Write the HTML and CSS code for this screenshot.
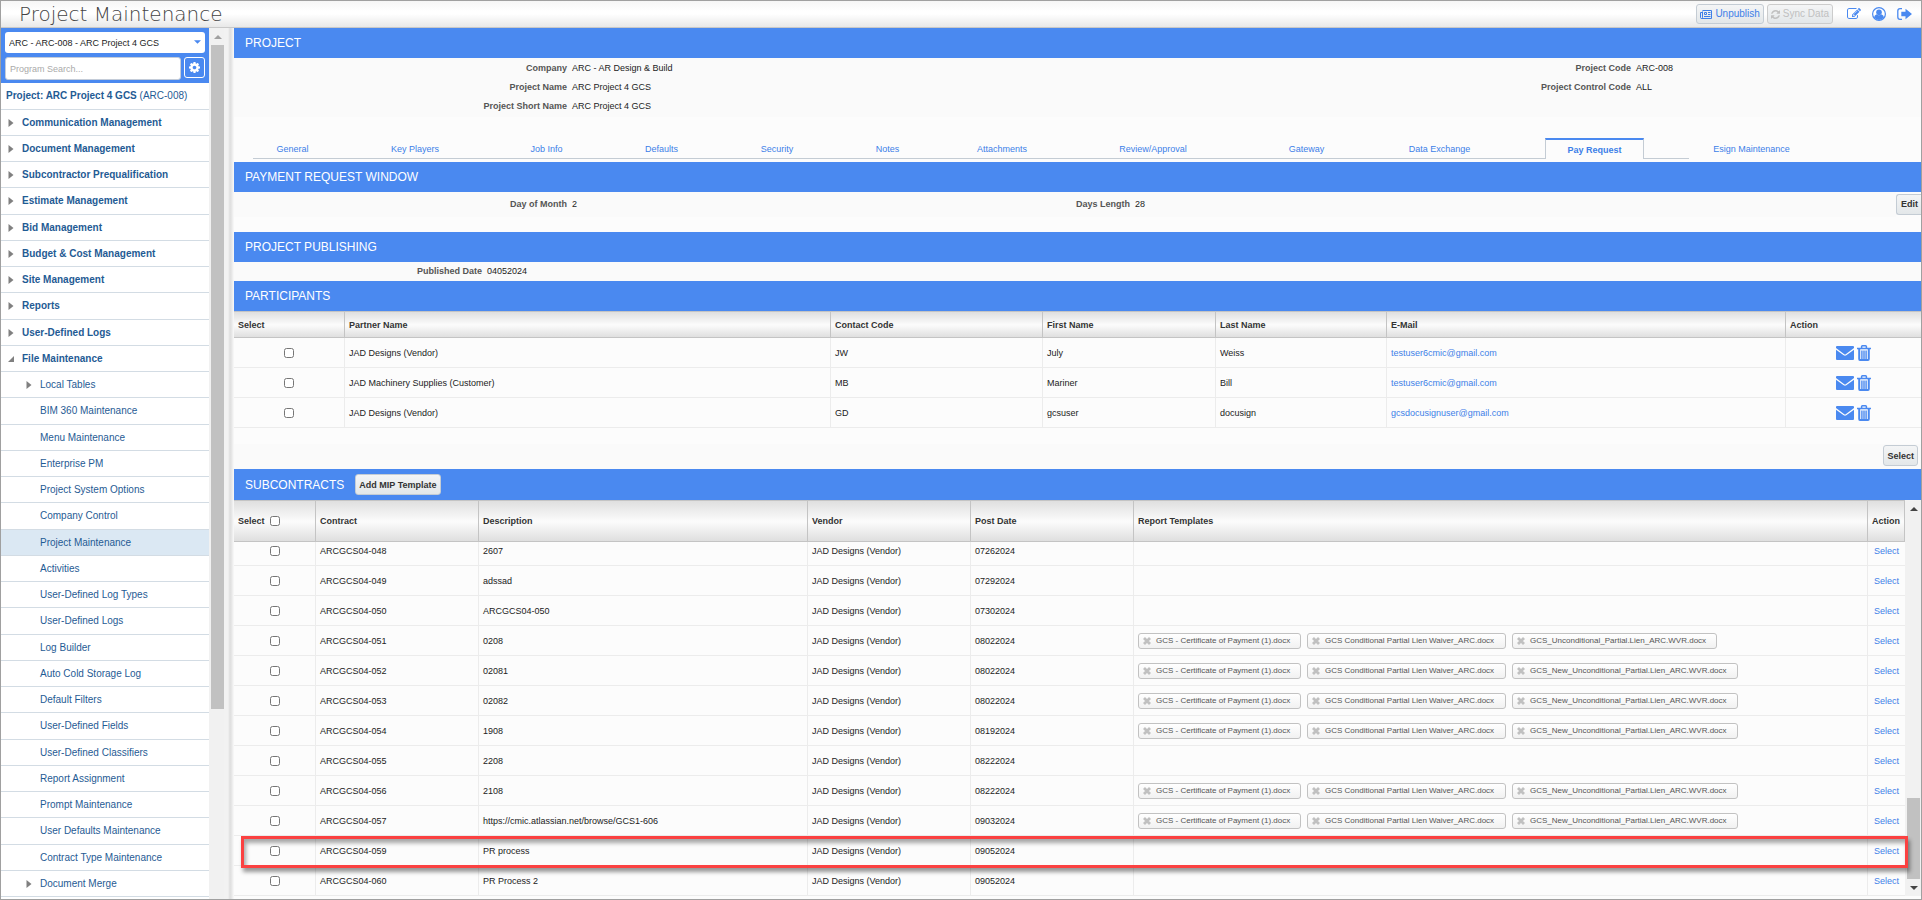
FILE: index.html
```html
<!DOCTYPE html>
<html lang="en">
<head>
<meta charset="utf-8">
<title>Project Maintenance</title>
<link rel="stylesheet" href="styles.css">
</head>
<body>
<svg class="defs" aria-hidden="true">
  <symbol id="i-mail" viewBox="0 0 18 14"><path fill="currentColor" d="M0 1Q0 0 1 0H17Q18 0 18 1V2L9.700 8.200Q9 8.700 8.300 8.200L0 2ZM0 3.700L7.700 9.300Q9 10.200 10.300 9.300L18 3.700V13Q18 14 17 14H1Q0 14 0 13Z"/></symbol>
  <symbol id="i-trash" viewBox="0 0 14 16"><path fill="none" stroke="currentColor" stroke-width="1.500" d="M4.600 3V1.600Q4.600 .8 5.400 .8H8.600Q9.400 .8 9.400 1.600V3M0 3.500H14"/><path fill="none" stroke="currentColor" stroke-width="2" d="M2.200 4V14Q2.200 15 3 15H11Q11.800 15 11.800 14V4"/><path fill="none" stroke="currentColor" stroke-width="1.400" d="M4.900 5.500V14M7 5.500V14M9.100 5.500V14"/></symbol>
  <symbol id="i-x" viewBox="0 0 8 8"><path fill="none" stroke="currentColor" stroke-width="2.800" d="M1 1L7 7M7 1L1 7"/></symbol>
  <symbol id="i-right" viewBox="0 0 5 8"><path fill="currentColor" d="M0 0L5 4L0 8Z"/></symbol>
  <symbol id="i-open" viewBox="0 0 6 6"><path fill="currentColor" d="M6 0V6H0Z"/></symbol>
  <symbol id="i-up" viewBox="0 0 8 4"><path fill="currentColor" d="M4 0L8 4H0Z"/></symbol>
  <symbol id="i-down" viewBox="0 0 8 4"><path fill="currentColor" d="M0 0H8L4 4Z"/></symbol>
</svg>
<div class="app">
  <header class="top">
    <h1>Project Maintenance</h1>
    <div class="tools">
      <button class="btn link-btn"><svg width="12" height="9" viewBox="0 0 12 9"><path fill="none" stroke="currentColor" d="M2.500 1.500V7.500Q2.500 8.500 1.500 8.500Q.5 8.500 .5 7.500V2.500H2.500M2.500 .5H11.500V8.500H1.500M8 2.500H10.500M8 4.500H10.500M4 6.500H10.500"/><path fill="none" stroke="currentColor" d="M4.500 2.500H6.500V4.500H4.500Z"/></svg>Unpublish</button>
      <button class="btn" disabled><svg width="9" height="9" viewBox="128 128 1536 1536"><path fill="currentColor" d="M1639 1056q0 5-1 7-64 268-268 434.500t-478 166.500q-146 0-282.500-55t-243.500-157l-129 129q-19 19-45 19t-45-19-19-45v-448q0-26 19-45t45-19h448q26 0 45 19t19 45-19 45l-137 137q71 66 161 102t187 36q134 0 250-65t186-179q11-17 53-117 8-23 30-23h192q13 0 22.500 9.500t9.500 22.500zm25-800v448q0 26-19 45t-45 19h-448q-26 0-45-19t-19-45 19-45l138-138q-148-137-349-137-134 0-250 65t-186 179q-11 17-53 117-8 23-30 23h-199q-13 0-22.500-9.500t-9.500-22.500v-7q65-268 270-434.500t480-166.500q146 0 284 55.500t245 156.500l130-129q19-19 45-19t45 19 19 45z"/></svg>Sync Data</button>
      <button class="icon-btn" aria-label="Edit"><svg width="14" height="12" viewBox="0 128 1792 1536"><path fill="currentColor" d="M888 1184l116-116-152-152-116 116v56h96v96h56zm440-720q-16-16-33 1l-350 350q-17 17-1 33t33-1l350-350q17-17 1-33zm80 594v190q0 119-84.500 203.500t-203.500 84.500h-832q-119 0-203.500-84.500t-84.500-203.500v-832q0-119 84.500-203.500t203.500-84.500h832q63 0 117 25 15 7 18 23 3 17-9 29l-49 49q-14 14-32 8-23-6-45-6h-832q-66 0-113 47t-47 113v832q0 66 47 113t113 47h832q66 0 113-47t47-113v-126q0-13 9-22l64-64q15-15 35-7t20 29zm-96-738l288 288-672 672h-288v-288zm444 132l-92 92-288-288 92-92q28-28 68-28t68 28l152 152q28 28 28 68t-28 68z"/></svg></button>
      <button class="icon-btn" aria-label="User"><svg width="14" height="14" viewBox="0 0 14 14"><circle cx="7" cy="7" r="6.400" fill="none" stroke="currentColor" stroke-width="1.200"/><circle cx="7" cy="5.300" r="2.800" fill="currentColor"/><path fill="currentColor" d="M2 10.600Q2.400 7.900 4.600 7.300Q7 9.400 9.400 7.300Q11.600 7.900 12 10.600Q9.800 13 7 13Q4.200 13 2 10.600Z"/></svg></button>
      <button class="icon-btn" aria-label="Sign out"><svg width="15" height="12" viewBox="0 0 15 12"><path fill="none" stroke="currentColor" stroke-width="1.300" d="M5 .7H3Q.8 .7 .8 3V9Q.8 11.300 3 11.300H5"/><path fill="currentColor" d="M4.300 3.800H8.500V.7L15 6L8.500 11.300V8.200H4.300Z"/></svg></button>
    </div>
  </header>
  <div class="body">
    <aside class="side">
      <div class="nav">
        <div class="finder">
          <div class="picker">
            <select aria-label="Project"><option>ARC - ARC-008 - ARC Project 4 GCS</option></select>
            <svg width="7" height="4"><use href="#i-down"/></svg>
          </div>
          <div class="search">
            <input type="text" aria-label="Program Search" placeholder="Program Search...">
            <button aria-label="Settings"><svg width="11" height="11" viewBox="128 128 1536 1536"><path fill="currentColor" d="M1152 896q0-106-75-181t-181-75-181 75-75 181 75 181 181 75 181-75 75-181zm512-109v222q0 12-8 23t-20 13l-185 28q-19 54-39 91 35 50 107 138 10 12 10 25t-9 23q-27 37-99 108t-94 71q-12 0-26-9l-138-108q-44 23-91 38-16 136-29 186-7 28-36 28h-222q-14 0-24.500-8.500t-11.500-21.500l-28-184q-49-16-90-37l-141 107q-10 9-25 9-14 0-25-11-126-114-165-168-7-10-7-23 0-12 8-23 15-21 51-66.500t54-70.500q-27-50-41-99l-183-27q-13-2-21-12.500t-8-23.500v-222q0-12 8-23t19-13l186-28q14-46 39-92-40-57-107-138-10-12-10-24 0-10 9-23 26-36 98.500-107.500t94.500-71.500q13 0 26 10l138 107q44-23 91-38 16-136 29-186 7-28 36-28h222q14 0 24.500 8.500t11.500 21.500l28 184q49 16 90 37l142-107q9-9 24-9 13 0 25 10 129 119 165 170 7 8 7 22 0 12-8 23-15 21-51 66.500t-54 70.500q26 50 41 98l183 28q13 2 21 12.500t8 23.500z"/></svg></button>
          </div>
        </div>
        <p class="current"><strong>Project: ARC Project 4 GCS</strong> (ARC-008)</p>
        <ul class="menu">
          <li class="group"><svg width="5" height="8"><use href="#i-right"/></svg><a href="#">Communication Management</a></li>
          <li class="group"><svg width="5" height="8"><use href="#i-right"/></svg><a href="#">Document Management</a></li>
          <li class="group"><svg width="5" height="8"><use href="#i-right"/></svg><a href="#">Subcontractor Prequalification</a></li>
          <li class="group"><svg width="5" height="8"><use href="#i-right"/></svg><a href="#">Estimate Management</a></li>
          <li class="group"><svg width="5" height="8"><use href="#i-right"/></svg><a href="#">Bid Management</a></li>
          <li class="group"><svg width="5" height="8"><use href="#i-right"/></svg><a href="#">Budget &amp; Cost Management</a></li>
          <li class="group"><svg width="5" height="8"><use href="#i-right"/></svg><a href="#">Site Management</a></li>
          <li class="group"><svg width="5" height="8"><use href="#i-right"/></svg><a href="#">Reports</a></li>
          <li class="group"><svg width="5" height="8"><use href="#i-right"/></svg><a href="#">User-Defined Logs</a></li>
          <li class="group"><svg width="6" height="6"><use href="#i-open"/></svg><a href="#">File Maintenance</a></li>
          <li class="sub"><svg width="5" height="8"><use href="#i-right"/></svg><a href="#">Local Tables</a></li>
          <li class="leaf"><a href="#">BIM 360 Maintenance</a></li>
          <li class="leaf"><a href="#">Menu Maintenance</a></li>
          <li class="leaf"><a href="#">Enterprise PM</a></li>
          <li class="leaf"><a href="#">Project System Options</a></li>
          <li class="leaf"><a href="#">Company Control</a></li>
          <li class="leaf selected"><a href="#">Project Maintenance</a></li>
          <li class="leaf"><a href="#">Activities</a></li>
          <li class="leaf"><a href="#">User-Defined Log Types</a></li>
          <li class="leaf"><a href="#">User-Defined Logs</a></li>
          <li class="leaf"><a href="#">Log Builder</a></li>
          <li class="leaf"><a href="#">Auto Cold Storage Log</a></li>
          <li class="leaf"><a href="#">Default Filters</a></li>
          <li class="leaf"><a href="#">User-Defined Fields</a></li>
          <li class="leaf"><a href="#">User-Defined Classifiers</a></li>
          <li class="leaf"><a href="#">Report Assignment</a></li>
          <li class="leaf"><a href="#">Prompt Maintenance</a></li>
          <li class="leaf"><a href="#">User Defaults Maintenance</a></li>
          <li class="leaf"><a href="#">Contract Type Maintenance</a></li>
          <li class="sub"><svg width="5" height="8"><use href="#i-right"/></svg><a href="#">Document Merge</a></li>
        </ul>
      </div>
      <div class="bar side-bar"><span class="arrow"><svg width="8" height="4"><use href="#i-up"/></svg></span><span class="thumb"></span><span class="rest"></span></div>
      <div class="splitter"></div>
    </aside>
    <main class="main">
      <h2>PROJECT</h2>
      <dl class="form project">
        <div class="f-left"><dt>Company</dt><dd>ARC - AR Design &amp; Build</dd></div>
        <div class="f-right"><dt>Project Code</dt><dd>ARC-008</dd></div>
        <div class="f-left"><dt>Project Name</dt><dd>ARC Project 4 GCS</dd></div>
        <div class="f-right"><dt>Project Control Code</dt><dd>ALL</dd></div>
        <div class="f-left"><dt>Project Short Name</dt><dd>ARC Project 4 GCS</dd></div>
      </dl>
      <ul class="tabs">
        <li><a href="#">General</a></li><li><a href="#">Key Players</a></li><li><a href="#">Job Info</a></li><li><a href="#">Defaults</a></li><li><a href="#">Security</a></li><li><a href="#">Notes</a></li><li><a href="#">Attachments</a></li><li><a href="#">Review/Approval</a></li><li><a href="#">Gateway</a></li><li><a href="#">Data Exchange</a></li><li></li><li class="on"><a href="#">Pay Request</a></li><li></li><li class="off"><a href="#">Esign Maintenance</a></li>
      </ul>
      <h2>PAYMENT REQUEST WINDOW</h2>
      <div class="window">
        <dl class="form payment">
          <div><dt>Day of Month</dt><dd>2</dd></div>
          <div><dt>Days Length</dt><dd>28</dd></div>
        </dl>
        <button class="btn edit">Edit</button>
      </div>
      <h2>PROJECT PUBLISHING</h2>
      <dl class="form publishing"><div><dt>Published Date</dt><dd>04052024</dd></div></dl>
      <h2>PARTICIPANTS</h2>
      <table class="people">
        <colgroup><col class="p1"><col class="p2"><col class="p3"><col class="p4"><col class="p5"><col class="p6"><col class="p7"></colgroup>
        <thead><tr><th>Select</th><th>Partner Name</th><th>Contact Code</th><th>First Name</th><th>Last Name</th><th>E-Mail</th><th>Action</th></tr></thead>
        <tbody>
          <tr><td class="mid"><input type="checkbox" aria-label="Select July Weiss"></td><td>JAD Designs (Vendor)</td><td>JW</td><td>July</td><td>Weiss</td><td><a href="#">testuser6cmic@gmail.com</a></td><td><div class="acts"><button aria-label="Email"><svg width="18" height="14"><use href="#i-mail"/></svg></button><button aria-label="Delete"><svg width="14" height="16"><use href="#i-trash"/></svg></button></div></td></tr>
          <tr><td class="mid"><input type="checkbox" aria-label="Select Mariner Bill"></td><td>JAD Machinery Supplies (Customer)</td><td>MB</td><td>Mariner</td><td>Bill</td><td><a href="#">testuser6cmic@gmail.com</a></td><td><div class="acts"><button aria-label="Email"><svg width="18" height="14"><use href="#i-mail"/></svg></button><button aria-label="Delete"><svg width="14" height="16"><use href="#i-trash"/></svg></button></div></td></tr>
          <tr><td class="mid"><input type="checkbox" aria-label="Select gcsuser docusign"></td><td>JAD Designs (Vendor)</td><td>GD</td><td>gcsuser</td><td>docusign</td><td><a href="#">gcsdocusignuser@gmail.com</a></td><td><div class="acts"><button aria-label="Email"><svg width="18" height="14"><use href="#i-mail"/></svg></button><button aria-label="Delete"><svg width="14" height="16"><use href="#i-trash"/></svg></button></div></td></tr>
        </tbody>
      </table>
      <div class="foot"><button class="btn">Select</button></div>
      <div class="heading"><h2>SUBCONTRACTS</h2><button class="btn">Add MIP Template</button></div>
      <div class="subs">
        <table class="contracts">
          <colgroup><col class="s1"><col class="s2"><col class="s3"><col class="s4"><col class="s5"><col><col class="s7"></colgroup>
          <thead><tr><th><label class="all">Select<input type="checkbox"></label></th><th>Contract</th><th>Description</th><th>Vendor</th><th>Post Date</th><th>Report Templates</th><th class="act">Action</th></tr></thead>
          <tbody>
            <tr class="cut"><td class="mid"><input type="checkbox" aria-label="ARCGCS04-048"></td><td>ARCGCS04-048</td><td>2607</td><td>JAD Designs (Vendor)</td><td>07262024</td><td></td><td class="act"><a href="#">Select</a></td></tr>
            <tr><td class="mid"><input type="checkbox" aria-label="ARCGCS04-049"></td><td>ARCGCS04-049</td><td>adssad</td><td>JAD Designs (Vendor)</td><td>07292024</td><td></td><td class="act"><a href="#">Select</a></td></tr>
            <tr><td class="mid"><input type="checkbox" aria-label="ARCGCS04-050"></td><td>ARCGCS04-050</td><td>ARCGCS04-050</td><td>JAD Designs (Vendor)</td><td>07302024</td><td></td><td class="act"><a href="#">Select</a></td></tr>
            <tr><td class="mid"><input type="checkbox" aria-label="ARCGCS04-051"></td><td>ARCGCS04-051</td><td>0208</td><td>JAD Designs (Vendor)</td><td>08022024</td><td><div class="chips"><button class="chip c1"><svg width="8" height="8"><use href="#i-x"/></svg>GCS - Certificate of Payment (1).docx</button><button class="chip c2"><svg width="8" height="8"><use href="#i-x"/></svg>GCS Conditional Partial Lien Waiver_ARC.docx</button><button class="chip c3"><svg width="8" height="8"><use href="#i-x"/></svg>GCS_Unconditional_Partial.Lien_ARC.WVR.docx</button></div></td><td class="act"><a href="#">Select</a></td></tr>
            <tr><td class="mid"><input type="checkbox" aria-label="ARCGCS04-052"></td><td>ARCGCS04-052</td><td>02081</td><td>JAD Designs (Vendor)</td><td>08022024</td><td><div class="chips"><button class="chip c1"><svg width="8" height="8"><use href="#i-x"/></svg>GCS - Certificate of Payment (1).docx</button><button class="chip c2"><svg width="8" height="8"><use href="#i-x"/></svg>GCS Conditional Partial Lien Waiver_ARC.docx</button><button class="chip c3"><svg width="8" height="8"><use href="#i-x"/></svg>GCS_New_Unconditional_Partial.Lien_ARC.WVR.docx</button></div></td><td class="act"><a href="#">Select</a></td></tr>
            <tr><td class="mid"><input type="checkbox" aria-label="ARCGCS04-053"></td><td>ARCGCS04-053</td><td>02082</td><td>JAD Designs (Vendor)</td><td>08022024</td><td><div class="chips"><button class="chip c1"><svg width="8" height="8"><use href="#i-x"/></svg>GCS - Certificate of Payment (1).docx</button><button class="chip c2"><svg width="8" height="8"><use href="#i-x"/></svg>GCS Conditional Partial Lien Waiver_ARC.docx</button><button class="chip c3"><svg width="8" height="8"><use href="#i-x"/></svg>GCS_New_Unconditional_Partial.Lien_ARC.WVR.docx</button></div></td><td class="act"><a href="#">Select</a></td></tr>
            <tr><td class="mid"><input type="checkbox" aria-label="ARCGCS04-054"></td><td>ARCGCS04-054</td><td>1908</td><td>JAD Designs (Vendor)</td><td>08192024</td><td><div class="chips"><button class="chip c1"><svg width="8" height="8"><use href="#i-x"/></svg>GCS - Certificate of Payment (1).docx</button><button class="chip c2"><svg width="8" height="8"><use href="#i-x"/></svg>GCS Conditional Partial Lien Waiver_ARC.docx</button><button class="chip c3"><svg width="8" height="8"><use href="#i-x"/></svg>GCS_New_Unconditional_Partial.Lien_ARC.WVR.docx</button></div></td><td class="act"><a href="#">Select</a></td></tr>
            <tr><td class="mid"><input type="checkbox" aria-label="ARCGCS04-055"></td><td>ARCGCS04-055</td><td>2208</td><td>JAD Designs (Vendor)</td><td>08222024</td><td></td><td class="act"><a href="#">Select</a></td></tr>
            <tr><td class="mid"><input type="checkbox" aria-label="ARCGCS04-056"></td><td>ARCGCS04-056</td><td>2108</td><td>JAD Designs (Vendor)</td><td>08222024</td><td><div class="chips"><button class="chip c1"><svg width="8" height="8"><use href="#i-x"/></svg>GCS - Certificate of Payment (1).docx</button><button class="chip c2"><svg width="8" height="8"><use href="#i-x"/></svg>GCS Conditional Partial Lien Waiver_ARC.docx</button><button class="chip c3"><svg width="8" height="8"><use href="#i-x"/></svg>GCS_New_Unconditional_Partial.Lien_ARC.WVR.docx</button></div></td><td class="act"><a href="#">Select</a></td></tr>
            <tr><td class="mid"><input type="checkbox" aria-label="ARCGCS04-057"></td><td>ARCGCS04-057</td><td>https://cmic.atlassian.net/browse/GCS1-606</td><td>JAD Designs (Vendor)</td><td>09032024</td><td><div class="chips"><button class="chip c1"><svg width="8" height="8"><use href="#i-x"/></svg>GCS - Certificate of Payment (1).docx</button><button class="chip c2"><svg width="8" height="8"><use href="#i-x"/></svg>GCS Conditional Partial Lien Waiver_ARC.docx</button><button class="chip c3"><svg width="8" height="8"><use href="#i-x"/></svg>GCS_New_Unconditional_Partial.Lien_ARC.WVR.docx</button></div></td><td class="act"><a href="#">Select</a></td></tr>
            <tr><td class="mid"><input type="checkbox" aria-label="ARCGCS04-059"></td><td>ARCGCS04-059</td><td>PR process</td><td>JAD Designs (Vendor)</td><td>09052024</td><td></td><td class="act"><a href="#">Select</a></td></tr>
            <tr><td class="mid"><input type="checkbox" aria-label="ARCGCS04-060"></td><td>ARCGCS04-060</td><td>PR Process 2</td><td>JAD Designs (Vendor)</td><td>09052024</td><td></td><td class="act"><a href="#">Select</a></td></tr>
          </tbody>
        </table>
        <div class="bar subs-bar"><span class="arrow"><svg width="8" height="4"><use href="#i-up"/></svg></span><span class="rest"></span><span class="thumb"></span><span class="arrow"><svg width="8" height="4"><use href="#i-down"/></svg></span></div>
        <div class="marker"></div>
      </div>
    </main>
  </div>
</div>
</body>
</html>
```
FILE: styles.css
```css
* { box-sizing: border-box; }
body { margin: 0; font: 9px/12px "Liberation Sans", Arial, sans-serif; color: #222; background: #fff; }
h1, h2, p, ul, dl, dd { margin: 0; padding: 0; }
ul { list-style: none; }
a { color: #3d7fe8; text-decoration: none; }
button, input, select { font: inherit; margin: 0; }
button { color: inherit; border: 0; padding: 0; background: none; }
svg { display: block; flex: none; }
.defs { position: absolute; width: 0; height: 0; }

.app { display: flex; flex-direction: column; min-height: 100vh; border: 1px solid #a0a0a0; overflow: hidden; }
.top { display: flex; align-items: center; justify-content: space-between; height: 27px; padding: 0 9px 0 18px; border-bottom: 1px solid #c8c8c8; background: linear-gradient(#f6f6f6, #fff 40%, #fff 50%, #e8e8e8); }
h1 { font: 200 20px/26px "DejaVu Sans", sans-serif; color: #444; }
.tools { display: flex; align-items: center; }
.btn { display: inline-flex; align-items: center; gap: 3px; height: 21px; padding: 0 3px; border: 1px solid #c4ccd4; border-radius: 3px; background: linear-gradient(#f4f5f6, #e3e7e9); font-weight: bold; color: #333; white-space: nowrap; }
.tools .btn { height: 20px; padding: 0 3px; font-size: 10px; margin-right: 3px; font-weight: normal; }
.tools .link-btn { color: #3d7fe8; }
.tools .btn:disabled { color: #c0c0c0; border-color: #ccc; }
.icon-btn { color: #4a89f0; margin-left: 11px; }

.body { display: flex; flex: 1; }
.side { display: flex; width: 233px; flex: none; }
.nav { flex: 1; background: #fff; }
.finder { display: grid; gap: 4px; padding: 4px; background: #4a89f0; }
.picker { position: relative; }
.picker select { appearance: none; width: 100%; height: 21px; padding: 0 4px; border: 0; border-radius: 3px; background: #fff; color: #222; }
.picker svg { position: absolute; right: 4px; top: 8px; color: #4a89f0; }
.search { display: flex; gap: 3px; align-items: flex-start; height: 22px; }
.search input { flex: 1; min-width: 0; height: 23px; padding: 0 4px; border: 1px solid #c4ccd8; border-radius: 3px; }
.search input::placeholder { color: #aaa; }
.search button { display: grid; place-items: center; width: 21px; height: 21px; border: 1px solid #fff; border-radius: 3px; color: #fff; }
.current { height: 27px; padding: 7px 5px 0; font-size: 10px; color: #1f5b94; border-bottom: 1px solid #d3dce4; }
.menu { font-size: 10px; }
.menu li { display: flex; align-items: center; gap: 8px; height: 26px; padding-left: 21px; border-bottom: 1px solid #d3dce4; }
.menu li:nth-child(4n) { height: 27px; }
.menu a { color: #1f5b94; }
.menu svg { color: #808080; width: 6px; }
.menu .group { padding-left: 7px; font-weight: bold; }
.menu .sub { padding-left: 25px; }
.menu .leaf { padding-left: 39px; }
.menu .selected { background: #dbe8f3; }

.bar { display: flex; flex-direction: column; background: #f1f1f1; }
.bar .arrow { display: grid; place-items: center; height: 17px; }
.bar .thumb { background: #c1c1c1; }
.bar .rest { flex: 1; }
.side-bar { width: 15px; padding-left: 2px; color: #a0a0a0; }
.side-bar .thumb { flex: 0 0 664px; }
.splitter { width: 10px; background: linear-gradient(90deg, #f2f2f2 40%, #dedede 60%, #e6e6e6 75%, #fafafa); }

.main { flex: 1; min-width: 0; background: #fcfcfc; }
h2 { height: 30px; padding-left: 11px; font-size: 12px; line-height: 30px; font-weight: normal; color: #fff; background: #4a89f0; }
.form { background: #fafafa; }
.form div { display: grid; gap: 5px; align-items: center; }
.form dt { text-align: right; font-weight: bold; color: #555; }
.project { display: grid; grid-template-columns: 1064fr 623fr; grid-auto-rows: 19px; height: 59px; }
.project .f-left { grid-column: 1; grid-template-columns: 333px 1fr; }
.project .f-right { grid-column: 2; grid-template-columns: 333px 1fr; }
.payment { flex: 1; display: grid; grid-template-columns: 563fr 1099fr; height: 25px; padding-bottom: 2px; }
.payment div { grid-template-columns: 333px 1fr; }
.window { display: flex; height: 40px; }
.window .edit { margin-top: 2px; border-right: 0; border-radius: 3px 0 0 3px; width: 25px; padding: 0 4px 2px; }
.publishing div { height: 19px; padding-bottom: 2px; grid-template-columns: 248px 1fr; }

.tabs { display: grid; grid-template-columns: 79fr 166fr 97fr 133fr 98fr 123fr 106fr 196fr 111fr 155fr 28fr 99fr 45fr 125fr 107fr; height: 45px; padding: 21px 0 3px 19px; }
.tabs li { display: flex; align-items: center; justify-content: center; padding-top: 1px; border-bottom: 1px solid #c4ccd4; }
.tabs .on { border: solid #c4ccd4; border-width: 2px 1px 0; border-top-color: #4a89f0; font-weight: bold; }
.tabs .off { border: 0; }

table { width: 100%; border-collapse: separate; border-spacing: 0; table-layout: fixed; }
th, td { padding: 0 4px; text-align: left; white-space: nowrap; border-right: 1px solid #ececec; border-bottom: 1px solid #ececec; }
th { border-color: #c4c4c4; border-top: 1px solid #c4c4c4; color: #333; background: linear-gradient(#dfdfdf, #fbfbfb 50%, #fafafa 55%, #dfdfdf); }
td { height: 30px; }
th:last-child, td:last-child { border-right: 0; }
input[type="checkbox"] { width: 10px; height: 10px; vertical-align: middle; }
.mid { text-align: center; }
.people th { height: 27px; }
.p1 { width: 111px; } .p2 { width: 486px; } .p3 { width: 212px; } .p4 { width: 173px; } .p5 { width: 171px; } .p7 { width: 135px; }
.acts { display: flex; align-items: center; justify-content: center; gap: 3px; color: #4a89f0; }
.foot { display: flex; justify-content: flex-end; margin-top: 16px; padding: 1px 3px 3px; background: #fafafa; }
.heading { display: flex; align-items: center; gap: 11px; height: 31px; background: #4a89f0; }
.subs { position: relative; display: flex; }
.contracts { flex: 1; }
.contracts th { height: 42px; }
.s1 { width: 82px; } .s2 { width: 163px; } .s3 { width: 329px; } .s4 { width: 163px; } .s5 { width: 163px; } .s7 { width: 37px; }
.all { display: flex; align-items: center; gap: 5px; }
.cut td { height: 24px; padding-bottom: 6px; }
.act { text-align: center; padding: 0; }
.contracts th:last-child { border-right: 1px solid #c4c4c4; }
.chips { display: flex; gap: 6px; }
.chip { display: flex; align-items: center; gap: 5px; height: 16px; padding: 0 4px; border: 1px solid #c2c2c2; border-radius: 3px; background: linear-gradient(#fff, #f1f1f1); font-size: 8px; color: #555; }
.chip svg { color: #c0c0c0; }
.c1 { width: 163px; }
.c2 { width: 199px; }
.c3 { padding-right: 10px; }
.subs-bar { width: 16px; padding: 0 1px 0 2px; color: #444; }
.subs-bar .thumb { height: 81px; }
.marker { position: absolute; left: 7px; right: 13px; top: 336px; height: 32px; border: 3px solid #fb4141; box-shadow: 2px 4px 4px rgba(0,0,0,.4), inset 2px 4px 4px rgba(0,0,0,.35); pointer-events: none; }
```
